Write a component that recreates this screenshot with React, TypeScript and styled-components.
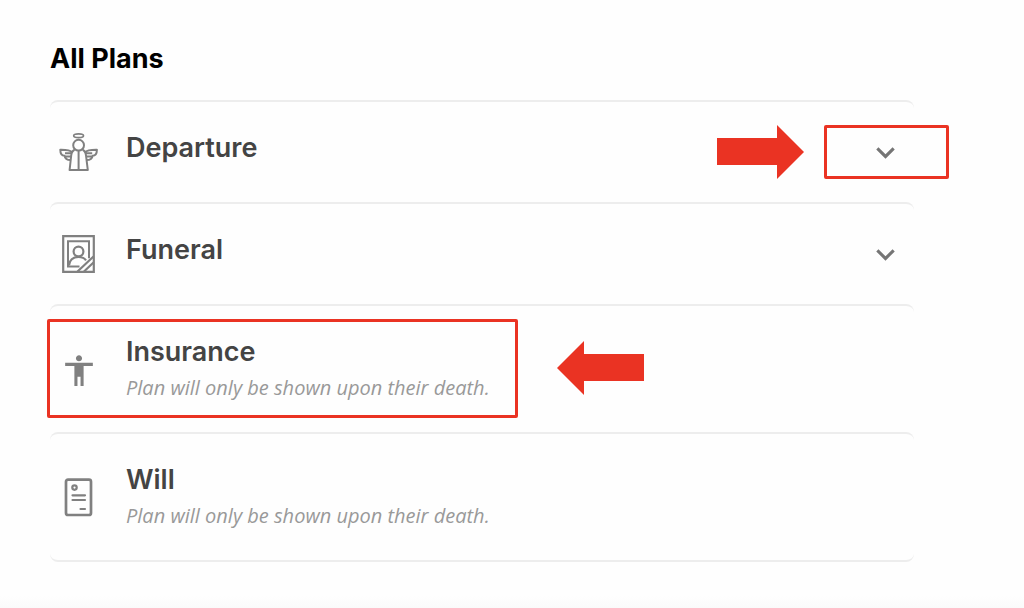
import React, { useState } from "react";
import styled, { createGlobalStyle } from "styled-components";

const RED = "#ea3323";
const GREY = "#808080";

const GlobalStyle = createGlobalStyle`
  * { box-sizing: border-box; }
  body { margin: 0; background: #fefefe; }
`;

const Page = styled.main`
  min-height: 100vh;
  padding: 41px 110px 45px 50px;
  background: linear-gradient(to top, #fafafa, #fefefe 12px);
  font-family: "Open Sans", "Noto Sans", sans-serif;
`;

const Heading = styled.h1`
  margin: 0 0 23px;
  font: 700 27px/36px Inter, "Open Sans", sans-serif;
  color: #000;
`;

const List = styled.ul`
  margin: 0;
  padding: 0;
  list-style: none;
`;

const Row = styled.li`
  position: relative;
  display: flex;
  align-items: center;
  min-height: 102px;
  padding: 0 10px 0 9px;
  border-top: 2px solid #ededed;
  border-radius: 8px;

  &:last-child {
    border-bottom: 2px solid #ededed;
  }
`;

const IconSlot = styled.span`
  display: flex;
  flex: none;
  width: 40px;
  height: 40px;
  color: ${GREY};

  svg { display: block; width: 40px; height: 40px; }
`;

const Body = styled.div`
  flex: 1;
  align-self: flex-start;
  padding: 28px 0 30px;
  margin-left: 27px;
`;

const Title = styled.h2`
  margin: 0;
  font: 600 27px/36px Inter, "Open Sans", sans-serif;
  color: #444;
`;

const Note = styled.p`
  margin: 4px 0 0;
  font-size: 20px;
  font-style: italic;
  line-height: 28px;
  color: #999;
`;

const Toggle = styled.button`
  display: flex;
  flex: none;
  padding: 0;
  border: 0;
  background: none;
  color: #757575;
  cursor: pointer;

  svg { display: block; width: 37px; height: 37px; }
`;

const Highlight = styled.span<{ $side: "row" | "toggle" }>`
  position: absolute;
  pointer-events: none;
  border: 3px solid ${RED};
  border-radius: 2px;
  ${({ $side }) =>
    $side === "row"
      ? "left: -3px; top: 13px; width: 471px; height: 99px;"
      : "right: -35px; top: 23px; width: 125px; height: 54px;"}
`;

const Arrow = styled.svg<{ $side: "row" | "toggle" }>`
  position: absolute;
  pointer-events: none;
  width: 87px;
  height: 54px;
  fill: ${RED};
  ${({ $side }) =>
    $side === "row" ? "left: 507px; top: 35px;" : "right: 110px; top: 23px;"}
`;

const AngelIcon = () => (
  <svg viewBox="0 0 40 40" fill="none" stroke="currentColor" strokeWidth="2" strokeLinejoin="round" aria-hidden="true">
    <ellipse cx="19.6" cy="3.8" rx="4.900" ry="1.900" strokeWidth="1.700" />
    <circle cx="19.6" cy="13.200" r="5.400" />
    <path d="M15.600 17.800c-2.200.9-3.100 3.200-3.400 5.700L10.600 38h18.200L27 23.500c-.3-2.500-1.200-4.800-3.400-5.700" />
    <path d="M19.600 18.600V38" />
    <path d="M13.500 20.500C11 18 7.500 17.700 1.300 17.800c0 3.700 1.500 6 4.300 6 .4 2.900 2.400 4.200 6 4.200M6 21.200h6.200M6.500 24.400h5.500M25.700 20.500c2.500-2.500 6-2.800 12.200-2.700 0 3.700-1.500 6-4.300 6-.4 2.900-2.400 4.200-6 4.200M33.200 21.200H27M32.700 24.400h-5.500" />
  </svg>
);

const PortraitIcon = () => (
  <svg viewBox="0 0 40 40" fill="none" stroke="currentColor" strokeWidth="2.200" aria-hidden="true">
    <path d="M4.200 2.200h30.600v35.600H4.200z" />
    <path d="M20.500 32.600H9V7.200h21v17" strokeWidth="2" />
    <circle cx="19.500" cy="17.500" r="4.900" />
    <path d="M10 31.500c.5-5.500 4-8.500 9.500-8.500 3.500 0 6 1 7.500 3.300M18.500 37.500L34.500 22.500M25 37.500l9.500-9" />
  </svg>
);

const PersonIcon = () => (
  <svg viewBox="-1 -2 26 26" fill="currentColor" aria-hidden="true">
    <path d="M12 2c1.100 0 2 .9 2 2s-.9 2-2 2-2-.9-2-2 .9-2 2-2zm9 7h-6v13h-2v-6h-2v6H9V9H3V7h18v2z" />
  </svg>
);

const DocumentIcon = () => (
  <svg viewBox="0 0 40 40" fill="none" stroke="currentColor" strokeWidth="2.700" aria-hidden="true">
    <rect x="7" y="2.700" width="25" height="35.300" rx="2" />
    <circle cx="15.500" cy="10.600" r="2.200" strokeWidth="2.200" />
    <path d="M13.500 18.300H26M13.500 23H26M21.500 32h4.500" strokeWidth="2.200" strokeLinecap="round" />
  </svg>
);

const ChevronIcon = () => (
  <svg viewBox="0 0 24 24" fill="currentColor" aria-hidden="true">
    <path d="M16.590 8.590L12 13.170 7.410 8.590 6 10l6 6 6-6z" />
  </svg>
);

const HIDDEN_NOTE = "Plan will only be shown upon their death.";

type Plan = {
  title: string;
  icon: React.ReactNode;
  note?: string;
  pointer?: "row" | "toggle";
};

const plans: Plan[] = [
  { title: "Departure", icon: <AngelIcon />, pointer: "toggle" },
  { title: "Funeral", icon: <PortraitIcon /> },
  { title: "Insurance", icon: <PersonIcon />, note: HIDDEN_NOTE, pointer: "row" },
  { title: "Will", icon: <DocumentIcon />, note: HIDDEN_NOTE },
];

function PlanRow({ title, icon, note, pointer }: Plan) {
  const [open, setOpen] = useState(false);
  return (
    <Row>
      <IconSlot>{icon}</IconSlot>
      <Body>
        <Title>{title}</Title>
        {note && <Note>{note}</Note>}
      </Body>
      {!note && (
        <Toggle type="button" aria-label={`Show ${title}`} aria-expanded={open} onClick={() => setOpen(!open)}>
          <ChevronIcon />
        </Toggle>
      )}
      {pointer && (
        <>
          <Highlight $side={pointer} />
          <Arrow $side={pointer} viewBox="0 0 87 54" aria-hidden="true">
            {pointer === "row" ? (
              <path d="M0 27L27 0v13h60v27H27v14z" />
            ) : (
              <path d="M87 27L60 0v13H0v27h60v14z" />
            )}
          </Arrow>
        </>
      )}
    </Row>
  );
}

export default function App() {
  return (
    <>
      <GlobalStyle />
      <Page>
        <Heading>All Plans</Heading>
        <List>
          {plans.map((plan) => (
            <PlanRow key={plan.title} {...plan} />
          ))}
        </List>
      </Page>
    </>
  );
}
